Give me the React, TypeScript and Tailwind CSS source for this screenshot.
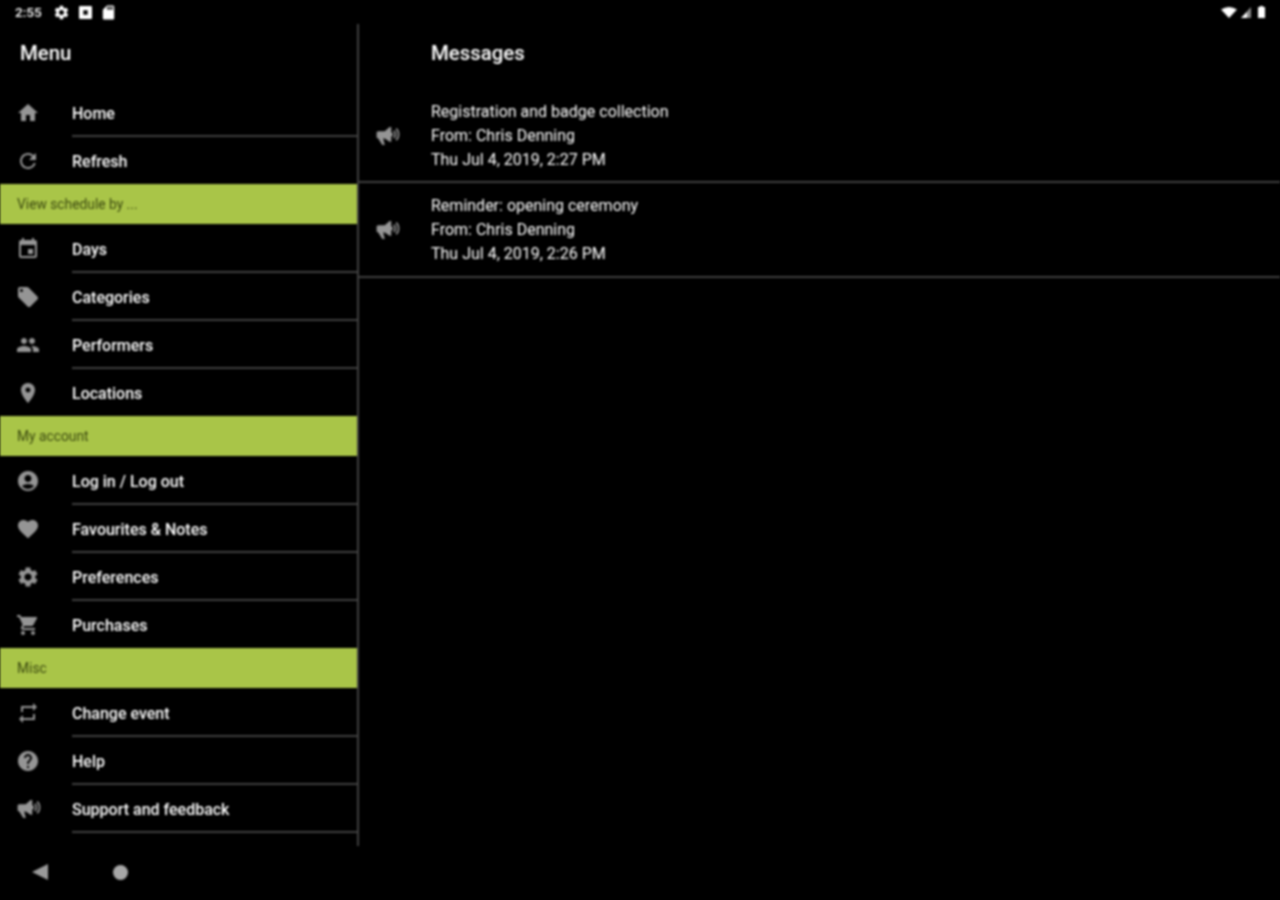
import React from "react";
import {
  MdHome, MdRefresh, MdEvent, MdLocalOffer, MdPeople, MdLocationOn, MdAccountCircle,
  MdFavorite, MdSettings, MdShoppingCart, MdRepeat, MdHelp, MdSdCard,
} from "react-icons/md";
import { IoMdMegaphone } from "react-icons/io";

type Item = { label: string; icon: React.ReactNode; last?: boolean };
const ic = "text-[#959595] text-[24px]";
const mega = <IoMdMegaphone className="text-[#959595] text-[26px]" />;

const Row = ({ label, icon, last }: Item) => (
  <div className="flex h-12 items-start">
    <div className="flex h-12 w-[72px] shrink-0 items-center pl-4 pt-[2px]">{icon}</div>
    <div className={`flex h-[49px] flex-1 items-center border-b-2 pt-[5px] text-[16px] font-medium text-white ${last ? "border-transparent" : "border-[#404040]"}`}>{label}</div>
  </div>
);
const Head = ({ label }: { label: string }) => (
  <div className="flex h-10 items-center bg-[#a9c548] pl-[17px] text-[13.8px] text-[#3c4a10]">{label}</div>
);
const Message = ({ title, date, offset }: { title: string; date: string; offset: string }) => (
  <div className={`flex h-[95px] items-center border-b-2 border-[#404040] ${offset}`}>
    <div className="flex w-[72px] shrink-0 items-center pl-4">{mega}</div>
    <div className="text-[16px] leading-6 text-white">
      <div>{title}</div>
      <div>From: Chris Denning</div>
      <div>{date}</div>
    </div>
  </div>
);

export default function App() {
  return (
    <div className="h-[900px] w-[1280px] overflow-hidden bg-black">
      <div className="flex h-[900px] w-[1280px] flex-col bg-black font-['Roboto',sans-serif] blur-[0.8px]">
        <div className="flex h-6 shrink-0 items-center justify-between pl-[15px] pr-[15px]">
          <div className="flex items-center text-white">
            <span className="mr-[11px] text-[13.5px] font-medium">2:55</span>
            <MdSettings className="mr-[9px] text-[17px]" />
            <svg viewBox="0 0 12 12" className="mr-[8px] h-[13px] w-[13px]"><path fillRule="evenodd" d="M1 0h10a1 1 0 0 1 1 1v10a1 1 0 0 1-1 1H1a1 1 0 0 1-1-1V1a1 1 0 0 1 1-1zm3 4v4h4V4z" fill="#fff" /></svg>
            <MdSdCard className="text-[17px]" />
          </div>
          <div className="flex items-center gap-[4px] text-white">
            <svg viewBox="0 0 16 11" className="h-[11px] w-[16px]"><path d="M0 2.5Q8-2.5 16 2.500L8 11z" fill="#fff" /></svg>
            <svg viewBox="0 0 12 11" className="mr-[1px] h-[11px] w-[12px]"><path d="M0 11 10 0v11z" fill="#8a8a8a" /><path d="M0 11 6 5v6z" fill="#fff" /></svg>
            <svg viewBox="0 0 7 12" className="h-[12px] w-[7px]"><path d="M2 0h3v1h2v11H0V1h2z" fill="#fff" /></svg>
          </div>
        </div>
        <div className="flex h-[822px] shrink-0">
          <div className="w-[359px] shrink-0 border-r-2 border-[#404040]">
            <div className="flex h-16 items-center pb-[6px] pl-5 text-[20.4px] font-medium text-white">Menu</div>
            <Row label="Home" icon={<MdHome className={ic} />} />
            <Row label="Refresh" last icon={<MdRefresh className={ic} />} />
            <Head label="View schedule by ..." />
            <Row label="Days" icon={<MdEvent className={ic} />} />
            <Row label="Categories" icon={<MdLocalOffer className={ic} />} />
            <Row label="Performers" icon={<MdPeople className={ic} />} />
            <Row label="Locations" last icon={<MdLocationOn className={ic} />} />
            <Head label="My account" />
            <Row label="Log in / Log out" icon={<MdAccountCircle className={ic} />} />
            <Row label="Favourites & Notes" icon={<MdFavorite className={ic} />} />
            <Row label="Preferences" icon={<MdSettings className={ic} />} />
            <Row label="Purchases" last icon={<MdShoppingCart className={ic} />} />
            <Head label="Misc" />
            <Row label="Change event" icon={<MdRepeat className={ic} />} />
            <Row label="Help" icon={<MdHelp className={ic} />} />
            <Row label="Support and feedback" icon={mega} />
          </div>
          <div className="flex-1">
            <div className="flex h-16 items-center pb-[6px] pl-[72px] text-[20.4px] font-medium text-white">Messages</div>
            <Message offset="pt-[2px]" title="Registration and badge collection" date="Thu Jul 4, 2019, 2:27 PM" />
            <Message offset="pt-[1px]" title="Reminder: opening ceremony" date="Thu Jul 4, 2019, 2:26 PM" />
          </div>
        </div>
        <div className="flex flex-1 items-center pb-[2px] pl-[32px]">
          <svg viewBox="0 0 16 16" className="h-[16px] w-[16px]"><path d="M16 0v16L0 8z" fill="#9a9a9a" /></svg>
          <div className="ml-[65px] h-[15px] w-[15px] rounded-full bg-[#a8a8a8]" />
        </div>
      </div>
    </div>
  );
}
